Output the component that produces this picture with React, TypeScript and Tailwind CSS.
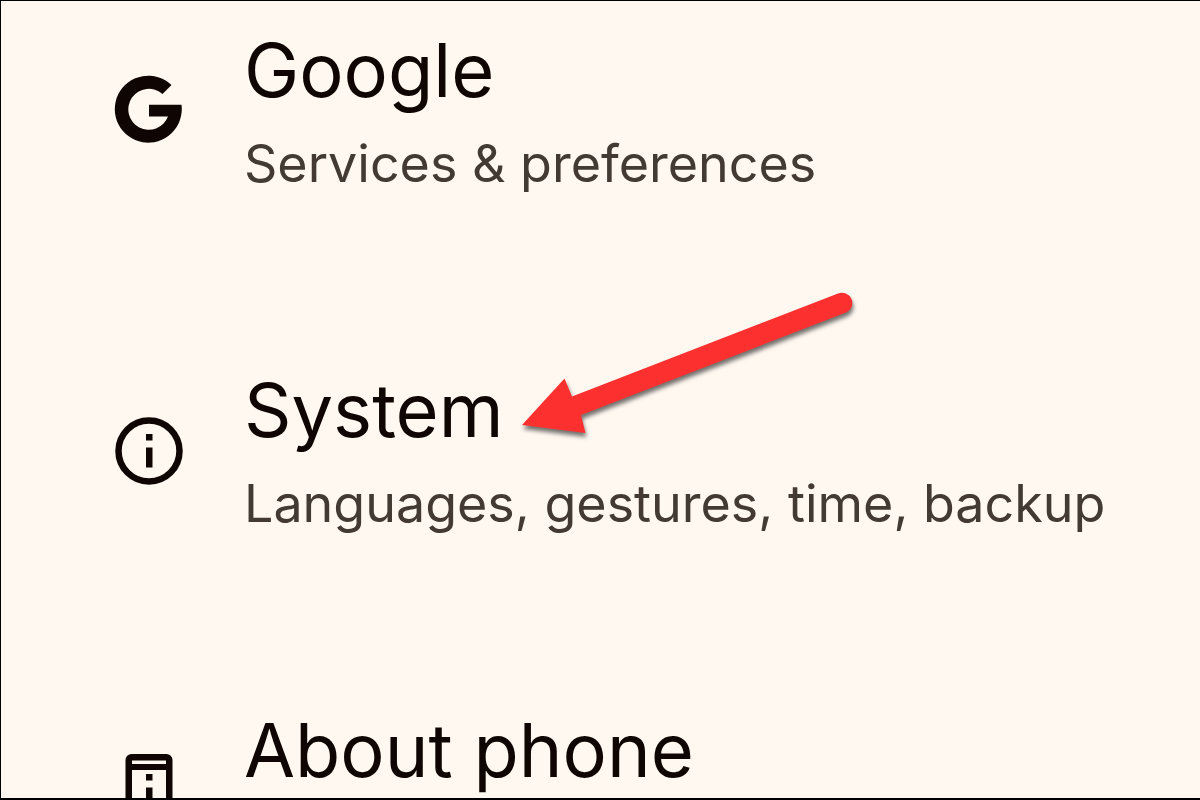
import type { ReactNode } from "react";

interface SettingsItem {
  id: string;
  title: string;
  summary?: string;
  icon: ReactNode;
}

function GoogleIcon() {
  return (
    <svg viewBox="0 0 80 80" className="size-20" fill="currentColor" aria-hidden="true">
      <path d="M63.5 15A33.5 33.5 0 1 0 73.5 34.8H41V46.5H60A20.5 20.5 0 1 1 54.5 24Z" />
    </svg>
  );
}

function InfoIcon() {
  return (
    <svg viewBox="0 0 80 80" className="size-20" aria-hidden="true">
      <circle cx="41" cy="41" r="30.5" fill="none" stroke="currentColor" strokeWidth="6.5" />
      <path d="M38 24h6.500v6.500h-6.500zM38 37.5h6.500v20h-6.500z" fill="currentColor" />
    </svg>
  );
}

function PhoneIcon() {
  return (
    <svg viewBox="0 0 80 80" className="size-20" fill="currentColor" aria-hidden="true">
      <path
        fillRule="evenodd"
        d="M23.5 4h35a6 6 0 0 1 6 6v62a6 6 0 0 1-6 6h-35a6 6 0 0 1-6-6V10a6 6 0 0 1 6-6zM24 10.500v3.500h34V10.500zM24 20v40h34V20zM24 67v4h34v-4z"
      />
      <path d="M38 24h6.500v6.500h-6.500zM38 37.500h6.500v20h-6.500z" />
    </svg>
  );
}

function ArrowMarker() {
  return (
    <svg
      viewBox="512 282 352 168"
      className="pointer-events-none absolute left-[511px] top-[281px] h-[168px] w-[352px] drop-shadow-[1px_4px_2px_rgba(0,0,0,0.55)]"
      aria-hidden="true"
    >
      <path
        d="M522 425L564.500 378.500L572 396.500L838 293.500A10 10 0 0 1 846 312.500L581 415L585.500 433Z"
        fill="#fd3030"
      />
    </svg>
  );
}

const ITEMS: SettingsItem[] = [
  {
    id: "google",
    title: "Google",
    summary: "Services & preferences",
    icon: <GoogleIcon />,
  },
  {
    id: "system",
    title: "System",
    summary: "Languages, gestures, time, backup",
    icon: <InfoIcon />,
  },
  {
    id: "about",
    title: "About phone",
    icon: <PhoneIcon />,
  },
];

function SettingsRow({ item }: { item: SettingsItem }) {
  return (
    <li>
      <a href={`#${item.id}`} className="flex items-start gap-14 pl-[107px] pr-10 pb-[142px]">
        <span className="mt-11 shrink-0 text-[#0f0502]">{item.icon}</span>
        <span className="flex min-w-0 flex-col gap-[18px] whitespace-nowrap">
          <span className="text-[74px] leading-[88px] text-[#0f0502]">{item.title}</span>
          {item.summary && (
            <span className="text-[52px] leading-[64px] text-[#433a34]">{item.summary}</span>
          )}
        </span>
      </a>
    </li>
  );
}

export default function App() {
  return (
    <main className="relative h-screen overflow-hidden border-t border-b-2 border-l border-black bg-[#fff8f1] font-['Inter',sans-serif]">
      <ul className="flex flex-col gap-7 pt-[25px]">
        {ITEMS.map((item) => (
          <SettingsRow key={item.id} item={item} />
        ))}
      </ul>
      <ArrowMarker />
    </main>
  );
}
